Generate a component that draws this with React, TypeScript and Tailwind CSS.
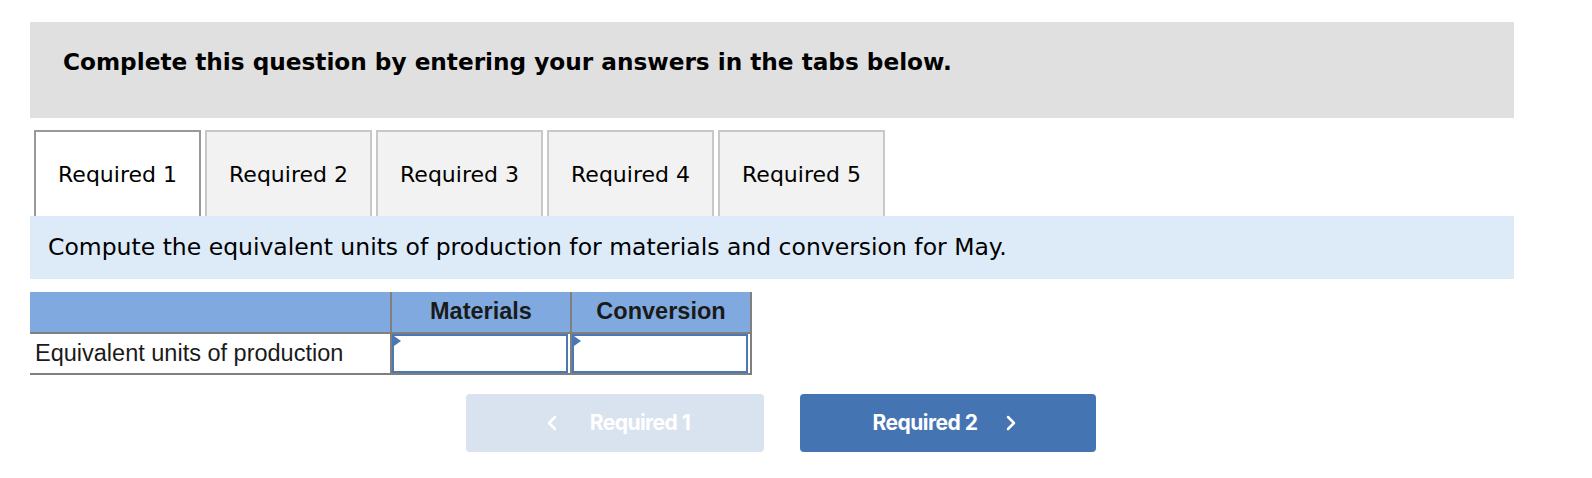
import { ChevronLeft, ChevronRight } from 'lucide-react'

const tabs = ['Required 1', 'Required 2', 'Required 3', 'Required 4', 'Required 5']

function InputCell() {
  return (
    <div className="relative h-full border-2 border-[#4a78b5] bg-white">
      <div className="absolute left-0 top-0 h-0 w-0 border-y-[5px] border-l-[7px] border-y-transparent border-l-[#4a78b5]" />
    </div>
  )
}

export default function App() {
  return (
    <div className="min-h-[478px] bg-white pt-[22px] pl-[30px]">
      <div className="w-[1484px]">
        {/* instruccion */}
        <div className="h-[96px] bg-[#e0e0e0] pl-[33px] pt-[26px]">
          <p className="text-[23.2px] font-bold leading-[28px] text-black" style={{ fontFamily: '"DejaVu Sans", Verdana, sans-serif' }}>
            Complete this question by entering your answers in the tabs below.
          </p>
        </div>

        {/* tabs */}
        <div className="mt-[12px] flex gap-[4px] pl-[4px]">
          {tabs.map((t, i) => (
            <div
              key={t}
              className={
                i === 0
                  ? 'flex h-[86px] w-[167px] items-center justify-center border-2 border-b-0 border-[#999999] bg-white text-[22px] text-black'
                  : 'flex h-[86px] w-[167px] items-center justify-center border-2 border-b-0 border-[#c8c8c8] bg-[#f2f2f2] text-[22px] text-black'
              }
              style={{ fontFamily: '"DejaVu Sans", Verdana, sans-serif' }}
            >
              {t}
            </div>
          ))}
        </div>

        <div className="flex h-[63px] items-center bg-[#ddebf8] pl-[18px]">
          <p className="text-[23.5px] text-black" style={{ fontFamily: '"DejaVu Sans", Verdana, sans-serif' }}>
            Compute the equivalent units of production for materials and conversion for May.
          </p>
        </div>

        {/* tabla */}
        <div className="mt-[13px] w-[722px]" style={{ fontFamily: '"Liberation Sans", Arial, sans-serif' }}>
          <div className="grid h-[40px] grid-cols-[362px_180px_180px] bg-[#80aadf]">
            <div className="border-r-2 border-[#7f7f7f]" />
            <div className="flex items-center justify-center border-r-2 border-[#7f7f7f] text-[23.5px] font-bold text-[#1a1a1a]">Materials</div>
            <div className="flex items-center justify-center border-r-2 border-[#7f7f7f] text-[23.5px] font-bold text-[#1a1a1a]">Conversion</div>
          </div>
          <div className="grid h-[43px] grid-cols-[362px_180px_180px] border-y-2 border-[#7f7f7f]">
            <div className="flex items-center border-r-2 border-[#7f7f7f] pl-[5px] text-[23.5px] text-[#1a1a1a]">Equivalent units of production</div>
            <div className="border-r-2 border-[#7f7f7f] pr-[2px]">
              <InputCell />
            </div>
            <div className="border-r-2 border-[#7f7f7f] pr-[2px]">
              <InputCell />
            </div>
          </div>
        </div>

        {/* navegacion */}
        <div className="mt-[19px] flex gap-[36px] pl-[436px]" style={{ fontFamily: 'Inter, "Noto Sans", sans-serif' }}>
          <button className="flex h-[58px] w-[298px] items-center justify-center gap-[26px] rounded-[4px] bg-[#d9e3ef] text-[21px] font-bold tracking-tight text-white">
            <ChevronLeft size={24} strokeWidth={2.5} />
            <span>Required 1</span>
          </button>
          <button className="flex h-[58px] w-[296px] items-center justify-center gap-[22px] rounded-[4px] bg-[#4574b2] text-[21px] font-bold tracking-tight text-white">
            <span>Required 2</span>
            <ChevronRight size={24} strokeWidth={2.5} />
          </button>
        </div>
      </div>
    </div>
  )
}
